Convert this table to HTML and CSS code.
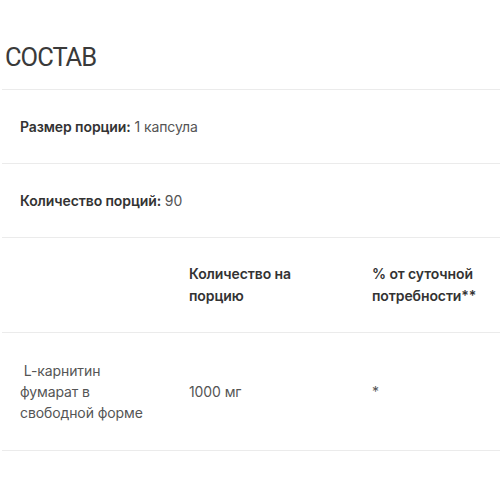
FILE: index.html
```html
<!DOCTYPE html>
<html lang="ru">
<head>
<meta charset="utf-8">
<link rel="stylesheet" href="styles.css">
</head>
<body>
<div class="wrap">
  <h2 class="title">СОСТАВ</h2>
  <table class="facts">
    <tr>
      <td colspan="3" class="c1"><b>Размер порции:</b> 1 капсула</td>
    </tr>
    <tr>
      <td colspan="3" class="c1"><b>Количество порций:</b> 90</td>
    </tr>
    <tr class="head">
      <td class="c1"></td>
      <td class="c2"><b>Количество на<br>порцию</b></td>
      <td class="c3"><b>% от суточной<br>потребности**</b></td>
    </tr>
    <tr class="item">
      <td class="c1">&nbsp;L-карнитин<br>фумарат в<br>свободной форме</td>
      <td class="c2">1000 мг</td>
      <td class="c3">*</td>
    </tr>
  </table>
</div>
</body>
</html>
```

FILE: styles.css
```css
html, body {
  margin: 0;
  padding: 0;
  background: #fff;
}
body {
  font-family: Inter, "Noto Sans", sans-serif;
  color: #555;
}
.wrap {
  padding-left: 2px;
}
.title {
  margin: 41px 0 16px 3px;
  font-family: Roboto, "Noto Sans", sans-serif;
  font-size: 25.5px;
  line-height: 32px;
  font-weight: 400;
  color: #3a3a3a;
  letter-spacing: -1px;
}
.facts {
  width: 498px;
  border-collapse: collapse;
  font-size: 14px;
  line-height: 22px;
  letter-spacing: -0.1px;
}
.facts tr {
  border-top: 1px solid #ebebeb;
}
.facts tr:last-child {
  border-bottom: 1px solid #ebebeb;
}
.facts td {
  padding: 26px 0 25px;
  vertical-align: middle;
  text-align: left;
}
.facts .head td {
  padding-top: 25px;
  padding-bottom: 25px;
}
.facts .item td {
  padding-top: 27px;
  padding-bottom: 27px;
  line-height: 21px;
}
.facts b {
  font-weight: 600;
  color: #333;
}
.facts td.c1 {
  padding-left: 18px;
  width: 169px;
}
.facts td.c2 {
  width: 183px;
}
```
